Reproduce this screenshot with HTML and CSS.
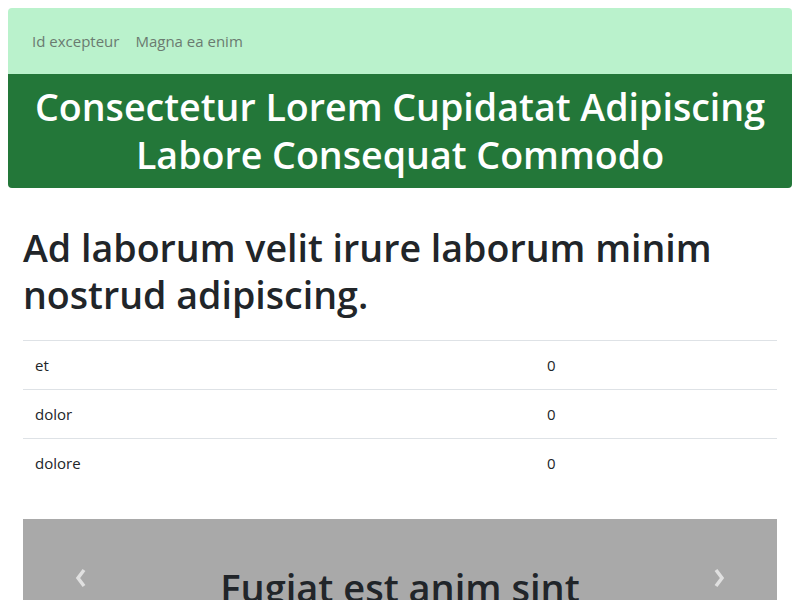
FILE: index.html
```html
<!DOCTYPE html>
<html lang="en">
<head>
<meta charset="utf-8">
<title>Page</title>
<link rel="stylesheet" href="styles.css">
</head>
<body>
<nav class="topnav">
  <a class="nav-link" href="#">Id excepteur</a>
  <a class="nav-link" href="#">Magna ea enim</a>
</nav>
<header class="banner">
  <h1 class="banner-title">Consectetur Lorem Cupidatat Adipiscing Labore Consequat Commodo</h1>
</header>
<main class="container">
  <h2 class="page-heading">Ad laborum velit irure laborum minim nostrud adipiscing.</h2>
  <table class="data-table">
    <tbody>
      <tr><td class="col-name">et</td><td>0</td></tr>
      <tr><td class="col-name">dolor</td><td>0</td></tr>
      <tr><td class="col-name">dolore</td><td>0</td></tr>
    </tbody>
  </table>
  <section class="carousel">
    <button class="carousel-ctrl" aria-label="Previous">
      <svg width="14" height="22" viewBox="0 0 14 22"><path d="M10 3 L4 11 L10 19" fill="none" stroke="currentColor" stroke-width="3.5"/></svg>
    </button>
    <div class="carousel-caption">
      <h3 class="caption-title">Fugiat est anim sint</h3>
    </div>
    <button class="carousel-ctrl" aria-label="Next">
      <svg width="14" height="22" viewBox="0 0 14 22"><path d="M4 3 L10 11 L4 19" fill="none" stroke="currentColor" stroke-width="3.5"/></svg>
    </button>
  </section>
</main>
</body>
</html>
```
FILE: styles.css
```css
* { box-sizing: border-box; }
body {
  margin: 8px;
  font-family: "Open Sans", "Noto Sans", sans-serif;
  color: #212529;
  font-size: 16px;
  line-height: 1.5;
}
.topnav {
  display: flex;
  align-items: center;
  height: 66px;
  padding: 0 16px;
  background: #baf2cc;
  border-radius: 4px 4px 0 0;
}
.nav-link {
  padding: 8px;
  font-size: 15px;
  color: #6a7b70;
  text-decoration: none;
}
.banner {
  background: #237739;
  border-radius: 0 0 4px 4px;
  padding: 9px 16px;
}
.banner-title {
  margin: 0;
  color: #fff;
  text-align: center;
  font-size: 37.6px;
  font-weight: 600;
  line-height: 48px;
}
.container {
  padding: 0 15px;
}
.page-heading {
  margin: 36px 0 22px;
  font-size: 37.6px;
  font-weight: 600;
  line-height: 47px;
}
.data-table {
  width: 100%;
  border-collapse: collapse;
  margin-bottom: 32px;
  font-size: 15px;
}
.data-table td {
  border-top: 1px solid #dee2e6;
  padding: 12px;
  line-height: 24px;
}
.col-name { width: 512px; }
.carousel {
  display: flex;
  align-items: flex-start;
  justify-content: space-between;
  background: #a9a9a9;
  height: 140px;
  padding: 44px 51px 0;
}
.carousel-ctrl {
  border: 0;
  background: none;
  color: #e0e0e0;
  padding: 0;
  margin-top: 4px;
  display: flex;
}
.carousel-caption { text-align: center; }
.caption-title {
  margin: 0;
  font-size: 38px;
  font-weight: 600;
  line-height: 48px;
  color: #212529;
}
```
